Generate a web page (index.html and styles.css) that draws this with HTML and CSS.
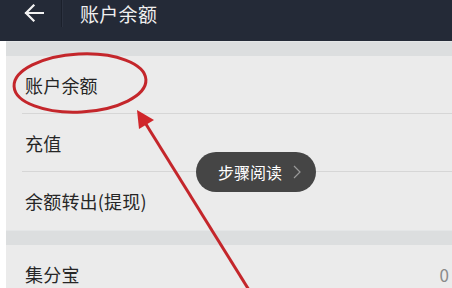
FILE: index.html
```html
<!DOCTYPE html>
<html lang="zh">
<head>
<meta charset="utf-8">
<link rel="stylesheet" href="styles.css">
</head>
<body>
<div class="screen">
  <header class="topbar">
    <span class="back">
      <svg width="20" height="18" viewBox="0 0 20 18"><path d="M19 9H2M9.5 1.5L2 9l7.5 7.5" fill="none" stroke="#f2f2f2" stroke-width="2.2" stroke-linecap="square"/></svg>
    </span>
    <span class="divider"></span>
    <h1 class="title">账户余额</h1>
  </header>
  <main class="content">
    <div class="band"></div>
    <div class="group">
      <div class="row"><span class="label">账户余额</span></div>
      <div class="row"><span class="label">充值</span></div>
      <div class="row last"><span class="label">余额转出(提现)</span></div>
    </div>
    <div class="band"></div>
    <div class="group">
      <div class="row last"><span class="label">集分宝</span><span class="value">0</span></div>
    </div>
  </main>
  <div class="toast"><span>步骤阅读</span><svg width="8" height="14" viewBox="0 0 8 14"><path d="M1 1l6 6-6 6" fill="none" stroke="#9a9a9a" stroke-width="1.2"/></svg></div>
  <svg class="annot" width="452" height="288" viewBox="0 0 452 288">
    <ellipse cx="80" cy="83" rx="66" ry="29" fill="none" stroke="#c4262b" stroke-width="3" transform="rotate(-3 80 83)"/>
    <line x1="144" y1="121" x2="249" y2="290" stroke="#c4262b" stroke-width="3"/>
    <polygon points="137,110 154,120 139,129" fill="#d0262b"/>
  </svg>
</div>
</body>
</html>
```

FILE: styles.css
```css
* { box-sizing: border-box; }
html, body { margin: 0; padding: 0; }
body {
  width: 452px;
  height: 288px;
  overflow: hidden;
  background: #ffffff;
  font-family: "Noto Sans CJK SC", "Noto Sans", sans-serif;
}
.screen {
  position: relative;
  width: 452px;
  height: 288px;
  overflow: hidden;
}
.topbar {
  height: 41px;
  background: #242a37;
  display: flex;
  align-items: flex-start;
}
.back {
  width: 20px;
  height: 18px;
  margin: 4px 0 0 24px;
  display: flex;
}
.divider {
  width: 2px;
  height: 27px;
  background: #1b202b;
  margin-left: 17px;
  border-right: 1px solid #2c3240;
}
.title {
  margin: 0 0 0 17px;
  font-size: 19px;
  font-weight: 400;
  color: #f0f0f0;
  line-height: 27px;
  letter-spacing: 0.3px;
}
.content {
  margin-left: 6px;
  background: #ebebeb;
  height: 247px;
}
.band {
  height: 15px;
  background: #dcdedf;
  border-top: 1px solid #e4e6e7;
}
.row {
  margin-left: 16px;
  padding-left: 3px;
  height: 58px;
  border-bottom: 1px solid #d6d6d6;
  display: flex;
  align-items: center;
  justify-content: space-between;
}
.row.last {
  border-bottom: none;
  height: 58px;
}
.label {
  font-size: 18px;
  color: #262626;
  letter-spacing: 0.2px;
}
.value {
  font-size: 17px;
  color: #8a8a8a;
  margin-right: 3px;
}
.toast {
  position: absolute;
  left: 196px;
  top: 152px;
  width: 120px;
  height: 40px;
  border-radius: 20px;
  background: #454545;
  display: flex;
  align-items: center;
  padding-left: 22px;
  gap: 11px;
}
.toast span {
  font-size: 16px;
  color: #ffffff;
}
.annot {
  position: absolute;
  left: 0;
  top: 0;
}
```
